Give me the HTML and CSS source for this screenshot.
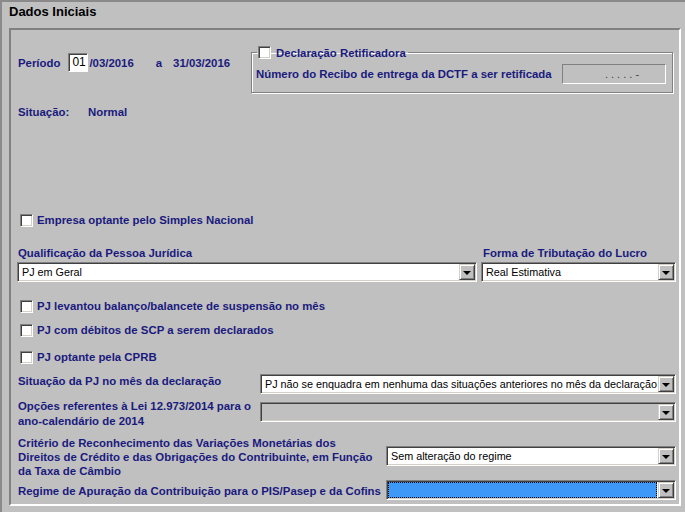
FILE: index.html
```html
<!DOCTYPE html>
<html>
<head>
<meta charset="utf-8">
<link rel="stylesheet" href="styles.css">
</head>
<body>
<div class="window">
  <div class="title">Dados Iniciais</div>
  <div class="panel">
    <div class="row-top">
      <div class="period">
        <span class="lbl">Período</span>
        <span class="field-day">01</span>
        <span class="lbl date1">/03/2016</span>
        <span class="lbl sep-a">a</span>
        <span class="lbl">31/03/2016</span>
      </div>
      <fieldset class="group">
        <legend class="legend"><span class="chk"></span><span class="lbl">Declaração Retificadora</span></legend>
        <div class="recibo">
          <span class="lbl">Número do Recibo de entrega da DCTF a ser retificada</span>
          <span class="field-recibo">. . . . . -</span>
        </div>
      </fieldset>
    </div>

    <div class="row-sit">
      <span class="lbl sit-lbl">Situação:</span>
      <span class="lbl">Normal</span>
    </div>

    <div class="check-row simples"><span class="chk"></span><span class="lbl">Empresa optante pelo Simples Nacional</span></div>

    <div class="row-qual">
      <div class="col-left">
        <div class="lbl">Qualificação da Pessoa Jurídica</div>
        <div class="select"><span class="value">PJ em Geral</span><span class="btn"><i class="tri"></i></span></div>
      </div>
      <div class="col-right">
        <div class="lbl forma">Forma de Tributação do Lucro</div>
        <div class="select"><span class="value">Real Estimativa</span><span class="btn"><i class="tri"></i></span></div>
      </div>
    </div>

    <div class="check-row c1"><span class="chk"></span><span class="lbl">PJ levantou balanço/balancete de suspensão no mês</span></div>
    <div class="check-row c2"><span class="chk"></span><span class="lbl">PJ com débitos de SCP a serem declarados</span></div>
    <div class="check-row c3"><span class="chk"></span><span class="lbl">PJ optante pela CPRB</span></div>

    <div class="frow r-sitpj">
      <div class="lbl flabel w1">Situação da PJ no mês da declaração</div>
      <div class="select grow"><span class="value">PJ não se enquadra em nenhuma das situações anteriores no mês da declaração</span><span class="btn"><i class="tri"></i></span></div>
    </div>

    <div class="frow r-opc">
      <div class="lbl flabel w1 lh15">Opções referentes à Lei 12.973/2014 para o<br>ano-calendário de 2014</div>
      <div class="select grow disabled mt3"><span class="value"></span><span class="btn"><i class="tri"></i></span></div>
    </div>

    <div class="frow r-crit">
      <div class="lbl flabel w2">Critério de Reconhecimento das Variações Monetárias dos<br>Direitos de Crédito e das Obrigações do Contribuinte, em Função<br>da Taxa de Câmbio</div>
      <div class="select grow mt10"><span class="value">Sem alteração do regime</span><span class="btn"><i class="tri"></i></span></div>
    </div>

    <div class="frow r-reg">
      <div class="lbl flabel w2 mt4">Regime de Apuração da Contribuição para o PIS/Pasep e da Cofins</div>
      <div class="select grow focused"><span class="value"><span class="sel-fill"></span></span><span class="btn"><i class="tri"></i></span></div>
    </div>
  </div>
</div>
</body>
</html>
```

FILE: styles.css
```css
* { box-sizing: border-box; }
html, body { margin: 0; padding: 0; }
body {
  background: #c0c0c0;
  font-family: "Liberation Sans", Arial, sans-serif;
  width: 685px;
  height: 512px;
  overflow: hidden;
}
.window {
  width: 685px;
  height: 512px;
  border-top: 2px solid #8a8a8a;
  border-left: 2px solid #8a8a8a;
  background: #c0c0c0;
}
.title {
  height: 26px;
  padding-left: 7px;
  padding-top: 2px;
  font-size: 13px;
  font-weight: bold;
  color: #000;
  line-height: 16px;
}
.panel {
  margin-left: 7px;
  width: 672px;
  height: 478px;
  border-top: 2px solid #808080;
  border-left: 2px solid #808080;
  border-right: 2px solid #fff;
  border-bottom: 2px solid #fff;
  padding-left: 6px;
  padding-right: 3px;
  display: flex;
  flex-direction: column;
}
.lbl {
  font-size: 11.4px;
  font-weight: bold;
  color: #1a1a7e;
  line-height: 14px;
  white-space: nowrap;
}
.chk {
  display: inline-block;
  width: 13px;
  height: 13px;
  background: #fff;
  border-top: 1px solid #808080;
  border-left: 1px solid #808080;
  border-right: 1px solid #fff;
  border-bottom: 1px solid #fff;
  box-shadow: inset 1px 1px 0 #404040, inset -1px -1px 0 #d4d0c8;
  flex: none;
}

/* top row */
.row-top {
  margin-top: 16px;
  height: 47px;
  display: flex;
  align-items: flex-start;
}
.period {
  margin-top: 7px;
  height: 19px;
  display: flex;
  align-items: center;
  padding-left: 1px;
}
.field-day {
  width: 20px;
  height: 19px;
  margin-left: 8px;
  background: #fff;
  border-top: 1px solid #808080;
  border-left: 1px solid #808080;
  border-right: 1px solid #fff;
  border-bottom: 1px solid #fff;
  box-shadow: inset 1px 1px 0 #404040;
  font-size: 12px;
  line-height: 17px;
  padding-left: 3px;
  color: #000;
}
.date1 { margin-left: 1px; }
.sep-a { margin-left: 22px; margin-right: 11px; }

.group {
  margin: 0 3px 0 auto;
  width: 422px;
  height: 47px;
  border: 1px solid #808080;
  box-shadow: inset 1px 1px 0 #fff, 1px 1px 0 #fff;
  padding: 5px 6px 0 4px;
}
.legend {
  padding: 0 2px 0 1px;
  margin-left: 1px;
  display: flex;
  align-items: center;
  gap: 5px;
  height: 13px;
}
.recibo {
  display: flex;
  align-items: center;
  justify-content: space-between;
}
.field-recibo {
  width: 104px;
  height: 20px;
  background: #c0c0c0;
  border-top: 1px solid #808080;
  border-left: 1px solid #808080;
  border-right: 1px solid #fff;
  border-bottom: 1px solid #fff;
  font-size: 11px;
  color: #404040;
  line-height: 18px;
  text-align: center;
  padding-left: 16px;
}

.row-sit {
  margin-top: 12px;
  display: flex;
  padding-left: 1px;
}
.sit-lbl { width: 70px; }

.check-row {
  display: flex;
  align-items: center;
  height: 14px;
  padding-left: 3px;
  gap: 4px;
}
.simples { margin-top: 94px; }
.c1 { margin-top: 17px; }
.c2 { margin-top: 10px; }
.c3 { margin-top: 13px; }

.row-qual {
  margin-top: 19px;
  display: flex;
  gap: 4px;
}
.col-left { width: 460px; }
.col-right { width: 195px; }
.col-left .lbl, .col-right .lbl { padding-left: 1px; margin-bottom: 2px; }
.col-right .forma { padding-left: 2px; }

.select {
  display: flex;
  height: 20px;
  min-width: 0;
  background: #fff;
  border-top: 1px solid #808080;
  border-left: 1px solid #808080;
  border-right: 1px solid #fff;
  border-bottom: 1px solid #fff;
  box-shadow: inset 1px 1px 0 #404040, inset -1px -1px 0 #d4d0c8;
  padding: 1px;
}
.select .value {
  flex: 1;
  min-width: 0;
  overflow: hidden;
  white-space: nowrap;
  font-size: 10.8px;
  line-height: 16px;
  color: #000;
  padding-left: 3px;
  padding-right: 0;
}
.select .btn {
  width: 16px;
  height: 16px;
  flex: none;
  background: #c0c0c0;
  border-top: 1px solid #d4d0c8;
  border-left: 1px solid #d4d0c8;
  border-right: 1px solid #404040;
  border-bottom: 1px solid #404040;
  box-shadow: inset 1px 1px 0 #fff, inset -1px -1px 0 #808080;
  display: flex;
  align-items: center;
  justify-content: center;
}
.tri {
  display: block;
  width: 0;
  height: 0;
  border-left: 4px solid transparent;
  border-right: 4px solid transparent;
  border-top: 4px solid #000;
  margin-top: 1px;
}
.select.disabled { background: #c0c0c0; }
.select.focused .value { padding: 0 1px 0 0; }
.sel-fill {
  display: block;
  height: 16px;
  background: #3d98f8;
  border: 1px dotted #000;
}

.frow { display: flex; align-items: flex-start; }
.flabel { padding-left: 1px; }
.w1 { width: 243px; flex: none; }
.w2 { width: 369px; flex: none; }
.grow { flex: 1 1 0; min-width: 0; }
.lh15 { line-height: 15px; }
.mt3 { margin-top: 3px; }
.mt4 { margin-top: 4px; }
.mt10 { margin-top: 10px; }
.r-sitpj { margin-top: 10px; }
.r-opc { margin-top: 5px; }
.r-crit { margin-top: 7px; }
.r-reg { margin-top: 2px; }
```
